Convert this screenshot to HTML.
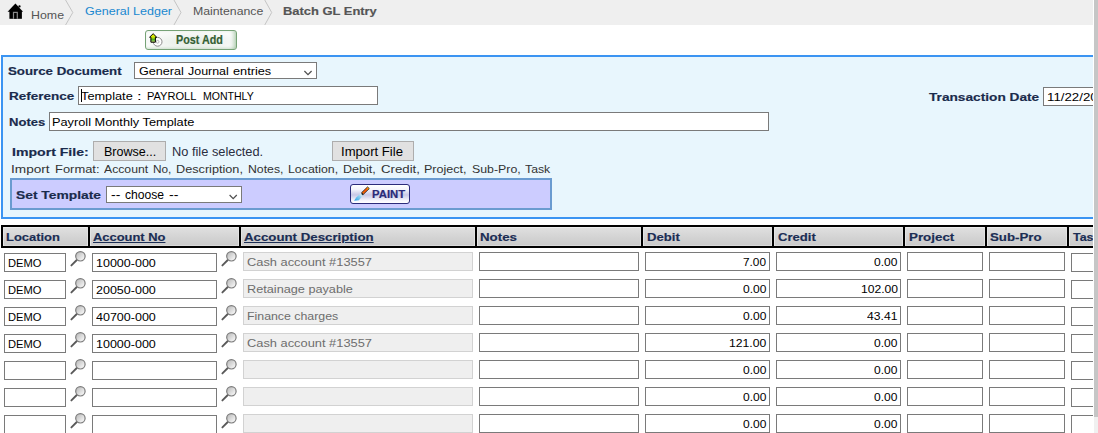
<!DOCTYPE html>
<html><head><meta charset="utf-8">
<style>
html,body{margin:0;padding:0;background:#fff;width:1098px;height:433px;overflow:hidden;}
body{position:relative;font-family:"Liberation Sans", sans-serif;}
#clip{position:absolute;left:0;top:0;width:1093px;height:433px;overflow:hidden;}
.a{position:absolute;box-sizing:border-box;}
.t{position:absolute;white-space:nowrap;transform-origin:0 0;line-height:20px;font-family:"Liberation Sans", sans-serif;}
.inp{position:absolute;box-sizing:border-box;background:#fff;border:1px solid #7a7a7a;}
.ro{position:absolute;box-sizing:border-box;background:#efefef;border:1px solid #d2d2d2;}
.btn{position:absolute;box-sizing:border-box;background:#e1e1e1;border:1px solid #adadad;}
.sep{position:absolute;top:225px;width:2px;height:23px;background:#000;}
.hc{position:absolute;top:227px;height:19px;background:linear-gradient(#ececec 0,#ececec 1px,#dfdfdf 1px,#d2d2d2 60%,#cacaca 18px,#d8d8d8 18px);box-shadow:inset 1px 0 #e4e4e4,inset -1px 0 #e2e2e2;}
</style></head><body>
<div id="clip">
<!-- breadcrumb -->
<div class="a" style="left:0;top:0;width:1093px;height:25px;background:#efefef;"></div>
<svg class="a" style="left:0;top:0" width="400" height="25">
 <polyline points="65,-1 72.8,12.5 65,26" fill="none" stroke="#c4c4c4" stroke-width="1"/>
 <polyline points="173.4,-1 181,12.5 173.4,26" fill="none" stroke="#c4c4c4" stroke-width="1"/>
 <polyline points="264.2,-1 271.7,12.5 264.2,26" fill="none" stroke="#c4c4c4" stroke-width="1"/>
 <!-- home icon -->
 <path d="M15.4,3.6 L7.6,11.7 L23.1,11.7 Z" fill="#000"/>
 <rect x="9.4" y="11" width="12.5" height="7.8" fill="#000"/>
 <rect x="12.9" y="11.8" width="5" height="7" fill="#8a8a8a"/>
 <rect x="14.1" y="13" width="2.6" height="5.8" fill="#000"/>
 <circle cx="19.5" cy="6.4" r="1.15" fill="#000"/>
</svg>
<!-- post add button -->
<div class="a" style="left:145px;top:30px;width:92px;height:20px;border:1px solid #76a276;border-radius:3px;background:radial-gradient(ellipse 52px 11px at 52% 60%, #e2ebe2 0%, #f3f6f3 65%, #fbfcfb 100%);box-shadow:inset -4px 0 4px -2px rgba(90,150,90,0.45), inset 0 -2px 3px -1px rgba(120,170,120,0.25);"></div>
<svg class="a" style="left:145px;top:30px" width="30" height="20">
 <circle cx="12.6" cy="11.8" r="4.4" fill="#fff" stroke="#8a8a8a" stroke-width="1"/>
 <circle cx="12.6" cy="11.8" r="1.4" fill="none" stroke="#aaa" stroke-width="0.8"/>
 <defs><linearGradient id="ga" x1="0" y1="0" x2="0" y2="1"><stop offset="0" stop-color="#f4f400"/><stop offset="0.42" stop-color="#c8e200"/><stop offset="0.72" stop-color="#44aa28"/><stop offset="1" stop-color="#eef286"/></linearGradient></defs>
 <path d="M8.15,3.7 L4.6,7.2 L5.9,7.2 L5.9,12.2 L10.4,12.2 L10.4,7.2 L11.7,7.2 Z" fill="url(#ga)" stroke="#000" stroke-width="1" stroke-linejoin="miter"/>
</svg>
<!-- panel -->
<div class="a" style="left:1px;top:55px;width:1100px;height:164px;border:2px solid #3b94f2;background:#e8f6fd;"></div>
<!-- source doc select -->
<div class="inp" style="left:134px;top:62px;width:183px;height:17px;"></div>
<svg class="a" style="left:300px;top:64px" width="16" height="14"><polyline points="4.4,7 8,10.6 11.6,7" fill="none" stroke="#505050" stroke-width="1.25"/></svg>
<div class="inp" style="left:78px;top:86px;width:300px;height:19px;"></div>
<div class="a" style="left:81px;top:89px;width:1px;height:13px;background:#000;"></div>
<div class="inp" style="left:49px;top:112px;width:720px;height:19px;"></div>
<div class="inp" style="left:1043px;top:87px;width:100px;height:19px;"></div>
<div class="btn" style="left:93px;top:141px;width:73px;height:20px;"></div>
<div class="btn" style="left:332px;top:141px;width:82px;height:20px;"></div>
<!-- template box -->
<div class="a" style="left:10px;top:178px;width:542px;height:32px;border:2px solid #6a9bd0;background:#ccccff;"></div>
<div class="inp" style="left:106px;top:186px;width:136px;height:17px;"></div>
<svg class="a" style="left:226px;top:188px" width="16" height="14"><polyline points="3.6,7 7.2,10.6 10.8,7" fill="none" stroke="#505050" stroke-width="1.25"/></svg>
<div class="a" style="left:350px;top:184px;width:60px;height:20px;border:1px solid #2b2b7a;border-radius:3px;background:linear-gradient(#ffffff,#f4f4fb 25%,#c8c8e6 55%,#f4f4fb 85%,#ffffff);"></div>
<svg class="a" style="left:350px;top:184px" width="22" height="20">
 <defs><linearGradient id="gb" x1="0" y1="1" x2="1" y2="0"><stop offset="0" stop-color="#28a0e4"/><stop offset="0.55" stop-color="#8fd0f0"/><stop offset="0.95" stop-color="#ffffff"/></linearGradient>
 <linearGradient id="gh" x1="0" y1="0" x2="1" y2="0"><stop offset="0" stop-color="#f07000"/><stop offset="0.6" stop-color="#ff5000"/><stop offset="1" stop-color="#ffd800"/></linearGradient></defs>
 <path d="M11.1,8.9 L13.3,11 L8.9,16.3 L4.1,16.7 L6.4,13.2 Z" fill="url(#gb)"/>
 <path d="M17.5,2.9 L19.3,4.6 L13.4,10.3 L11.7,8.6 Z" fill="url(#gh)" stroke="#1a1a1a" stroke-width="0.8" stroke-linejoin="round"/>
 <path d="M11.7,8.6 L13.4,10.3 L13,11.6 L11.3,10 Z" fill="#222"/>
</svg>
<!-- table header -->
<div class="a" style="left:1px;top:225px;width:1100px;height:23px;background:#000;"></div>
<div class="hc" style="left:3px;width:85px;"></div>
<div class="hc" style="left:90px;width:149px;"></div>
<div class="hc" style="left:241px;width:234px;"></div>
<div class="hc" style="left:477px;width:164px;"></div>
<div class="hc" style="left:643px;width:129px;"></div>
<div class="hc" style="left:774px;width:129px;"></div>
<div class="hc" style="left:905px;width:80px;"></div>
<div class="hc" style="left:987px;width:80px;"></div>
<div class="hc" style="left:1069px;width:80px;"></div>
<svg width="0" height="0" style="position:absolute"><defs><linearGradient id="gm" x1="0.1" y1="0.1" x2="0.9" y2="0.9"><stop offset="0" stop-color="#bcbcbc"/><stop offset="0.55" stop-color="#dedede"/><stop offset="1" stop-color="#fbfbfb"/></linearGradient></defs></svg>
<div class="inp" style="left:4px;top:253px;width:62px;height:19px;"></div>
<svg class="a" style="left:69px;top:250px" width="17" height="17" viewBox="0 0 17 17"><defs></defs><line x1="2.4" y1="15.4" x2="7.8" y2="10" stroke="#5a5a5a" stroke-width="1.9" stroke-linecap="round"/><circle cx="11.4" cy="6.3" r="4.7" fill="url(#gm)" stroke="#7c7c7c" stroke-width="1.2"/></svg>
<div class="inp" style="left:92px;top:253px;width:125px;height:19px;"></div>
<svg class="a" style="left:220px;top:250px" width="17" height="17" viewBox="0 0 17 17"><defs></defs><line x1="2.4" y1="15.4" x2="7.8" y2="10" stroke="#5a5a5a" stroke-width="1.9" stroke-linecap="round"/><circle cx="11.4" cy="6.3" r="4.7" fill="url(#gm)" stroke="#7c7c7c" stroke-width="1.2"/></svg>
<div class="ro" style="left:243px;top:252px;width:230px;height:19px;"></div>
<div class="inp" style="left:479px;top:252px;width:160px;height:19px;"></div>
<div class="inp" style="left:645px;top:252px;width:125px;height:19px;"></div>
<div class="inp" style="left:776px;top:252px;width:125px;height:19px;"></div>
<div class="inp" style="left:907px;top:252px;width:76px;height:19px;"></div>
<div class="inp" style="left:989px;top:252px;width:76px;height:19px;"></div>
<div class="inp" style="left:1071px;top:253px;width:76px;height:19px;"></div>
<div class="inp" style="left:4px;top:280px;width:62px;height:19px;"></div>
<svg class="a" style="left:69px;top:277px" width="17" height="17" viewBox="0 0 17 17"><defs></defs><line x1="2.4" y1="15.4" x2="7.8" y2="10" stroke="#5a5a5a" stroke-width="1.9" stroke-linecap="round"/><circle cx="11.4" cy="6.3" r="4.7" fill="url(#gm)" stroke="#7c7c7c" stroke-width="1.2"/></svg>
<div class="inp" style="left:92px;top:280px;width:125px;height:19px;"></div>
<svg class="a" style="left:220px;top:277px" width="17" height="17" viewBox="0 0 17 17"><defs></defs><line x1="2.4" y1="15.4" x2="7.8" y2="10" stroke="#5a5a5a" stroke-width="1.9" stroke-linecap="round"/><circle cx="11.4" cy="6.3" r="4.7" fill="url(#gm)" stroke="#7c7c7c" stroke-width="1.2"/></svg>
<div class="ro" style="left:243px;top:279px;width:230px;height:19px;"></div>
<div class="inp" style="left:479px;top:279px;width:160px;height:19px;"></div>
<div class="inp" style="left:645px;top:279px;width:125px;height:19px;"></div>
<div class="inp" style="left:776px;top:279px;width:125px;height:19px;"></div>
<div class="inp" style="left:907px;top:279px;width:76px;height:19px;"></div>
<div class="inp" style="left:989px;top:279px;width:76px;height:19px;"></div>
<div class="inp" style="left:1071px;top:280px;width:76px;height:19px;"></div>
<div class="inp" style="left:4px;top:307px;width:62px;height:19px;"></div>
<svg class="a" style="left:69px;top:304px" width="17" height="17" viewBox="0 0 17 17"><defs></defs><line x1="2.4" y1="15.4" x2="7.8" y2="10" stroke="#5a5a5a" stroke-width="1.9" stroke-linecap="round"/><circle cx="11.4" cy="6.3" r="4.7" fill="url(#gm)" stroke="#7c7c7c" stroke-width="1.2"/></svg>
<div class="inp" style="left:92px;top:307px;width:125px;height:19px;"></div>
<svg class="a" style="left:220px;top:304px" width="17" height="17" viewBox="0 0 17 17"><defs></defs><line x1="2.4" y1="15.4" x2="7.8" y2="10" stroke="#5a5a5a" stroke-width="1.9" stroke-linecap="round"/><circle cx="11.4" cy="6.3" r="4.7" fill="url(#gm)" stroke="#7c7c7c" stroke-width="1.2"/></svg>
<div class="ro" style="left:243px;top:306px;width:230px;height:19px;"></div>
<div class="inp" style="left:479px;top:306px;width:160px;height:19px;"></div>
<div class="inp" style="left:645px;top:306px;width:125px;height:19px;"></div>
<div class="inp" style="left:776px;top:306px;width:125px;height:19px;"></div>
<div class="inp" style="left:907px;top:306px;width:76px;height:19px;"></div>
<div class="inp" style="left:989px;top:306px;width:76px;height:19px;"></div>
<div class="inp" style="left:1071px;top:307px;width:76px;height:19px;"></div>
<div class="inp" style="left:4px;top:334px;width:62px;height:19px;"></div>
<svg class="a" style="left:69px;top:331px" width="17" height="17" viewBox="0 0 17 17"><defs></defs><line x1="2.4" y1="15.4" x2="7.8" y2="10" stroke="#5a5a5a" stroke-width="1.9" stroke-linecap="round"/><circle cx="11.4" cy="6.3" r="4.7" fill="url(#gm)" stroke="#7c7c7c" stroke-width="1.2"/></svg>
<div class="inp" style="left:92px;top:334px;width:125px;height:19px;"></div>
<svg class="a" style="left:220px;top:331px" width="17" height="17" viewBox="0 0 17 17"><defs></defs><line x1="2.4" y1="15.4" x2="7.8" y2="10" stroke="#5a5a5a" stroke-width="1.9" stroke-linecap="round"/><circle cx="11.4" cy="6.3" r="4.7" fill="url(#gm)" stroke="#7c7c7c" stroke-width="1.2"/></svg>
<div class="ro" style="left:243px;top:333px;width:230px;height:19px;"></div>
<div class="inp" style="left:479px;top:333px;width:160px;height:19px;"></div>
<div class="inp" style="left:645px;top:333px;width:125px;height:19px;"></div>
<div class="inp" style="left:776px;top:333px;width:125px;height:19px;"></div>
<div class="inp" style="left:907px;top:333px;width:76px;height:19px;"></div>
<div class="inp" style="left:989px;top:333px;width:76px;height:19px;"></div>
<div class="inp" style="left:1071px;top:334px;width:76px;height:19px;"></div>
<div class="inp" style="left:4px;top:361px;width:62px;height:19px;"></div>
<svg class="a" style="left:69px;top:358px" width="17" height="17" viewBox="0 0 17 17"><defs></defs><line x1="2.4" y1="15.4" x2="7.8" y2="10" stroke="#5a5a5a" stroke-width="1.9" stroke-linecap="round"/><circle cx="11.4" cy="6.3" r="4.7" fill="url(#gm)" stroke="#7c7c7c" stroke-width="1.2"/></svg>
<div class="inp" style="left:92px;top:361px;width:125px;height:19px;"></div>
<svg class="a" style="left:220px;top:358px" width="17" height="17" viewBox="0 0 17 17"><defs></defs><line x1="2.4" y1="15.4" x2="7.8" y2="10" stroke="#5a5a5a" stroke-width="1.9" stroke-linecap="round"/><circle cx="11.4" cy="6.3" r="4.7" fill="url(#gm)" stroke="#7c7c7c" stroke-width="1.2"/></svg>
<div class="ro" style="left:243px;top:360px;width:230px;height:19px;"></div>
<div class="inp" style="left:479px;top:360px;width:160px;height:19px;"></div>
<div class="inp" style="left:645px;top:360px;width:125px;height:19px;"></div>
<div class="inp" style="left:776px;top:360px;width:125px;height:19px;"></div>
<div class="inp" style="left:907px;top:360px;width:76px;height:19px;"></div>
<div class="inp" style="left:989px;top:360px;width:76px;height:19px;"></div>
<div class="inp" style="left:1071px;top:361px;width:76px;height:19px;"></div>
<div class="inp" style="left:4px;top:388px;width:62px;height:19px;"></div>
<svg class="a" style="left:69px;top:385px" width="17" height="17" viewBox="0 0 17 17"><defs></defs><line x1="2.4" y1="15.4" x2="7.8" y2="10" stroke="#5a5a5a" stroke-width="1.9" stroke-linecap="round"/><circle cx="11.4" cy="6.3" r="4.7" fill="url(#gm)" stroke="#7c7c7c" stroke-width="1.2"/></svg>
<div class="inp" style="left:92px;top:388px;width:125px;height:19px;"></div>
<svg class="a" style="left:220px;top:385px" width="17" height="17" viewBox="0 0 17 17"><defs></defs><line x1="2.4" y1="15.4" x2="7.8" y2="10" stroke="#5a5a5a" stroke-width="1.9" stroke-linecap="round"/><circle cx="11.4" cy="6.3" r="4.7" fill="url(#gm)" stroke="#7c7c7c" stroke-width="1.2"/></svg>
<div class="ro" style="left:243px;top:387px;width:230px;height:19px;"></div>
<div class="inp" style="left:479px;top:387px;width:160px;height:19px;"></div>
<div class="inp" style="left:645px;top:387px;width:125px;height:19px;"></div>
<div class="inp" style="left:776px;top:387px;width:125px;height:19px;"></div>
<div class="inp" style="left:907px;top:387px;width:76px;height:19px;"></div>
<div class="inp" style="left:989px;top:387px;width:76px;height:19px;"></div>
<div class="inp" style="left:1071px;top:388px;width:76px;height:19px;"></div>
<div class="inp" style="left:4px;top:415px;width:62px;height:19px;"></div>
<svg class="a" style="left:69px;top:412px" width="17" height="17" viewBox="0 0 17 17"><defs></defs><line x1="2.4" y1="15.4" x2="7.8" y2="10" stroke="#5a5a5a" stroke-width="1.9" stroke-linecap="round"/><circle cx="11.4" cy="6.3" r="4.7" fill="url(#gm)" stroke="#7c7c7c" stroke-width="1.2"/></svg>
<div class="inp" style="left:92px;top:415px;width:125px;height:19px;"></div>
<svg class="a" style="left:220px;top:412px" width="17" height="17" viewBox="0 0 17 17"><defs></defs><line x1="2.4" y1="15.4" x2="7.8" y2="10" stroke="#5a5a5a" stroke-width="1.9" stroke-linecap="round"/><circle cx="11.4" cy="6.3" r="4.7" fill="url(#gm)" stroke="#7c7c7c" stroke-width="1.2"/></svg>
<div class="ro" style="left:243px;top:414px;width:230px;height:19px;"></div>
<div class="inp" style="left:479px;top:414px;width:160px;height:19px;"></div>
<div class="inp" style="left:645px;top:414px;width:125px;height:19px;"></div>
<div class="inp" style="left:776px;top:414px;width:125px;height:19px;"></div>
<div class="inp" style="left:907px;top:414px;width:76px;height:19px;"></div>
<div class="inp" style="left:989px;top:414px;width:76px;height:19px;"></div>
<div class="inp" style="left:1071px;top:415px;width:76px;height:19px;"></div>
<div class="t" style="left:31.40px;top:5px;font-size:11.5px;color:#555;transform:scaleX(1.0766);">Home</div>
<div class="t" style="left:84.80px;top:1px;font-size:11.5px;color:#1a88d0;transform:scaleX(1.0888);">General Ledger</div>
<div class="t" style="left:192.50px;top:1px;font-size:11.5px;color:#555;transform:scaleX(1.0679);">Maintenance</div>
<div class="t" style="left:283.00px;top:1px;font-size:11.5px;font-weight:bold;-webkit-text-stroke:0.18px #555;color:#555;transform:scaleX(1.1232);">Batch GL Entry</div>
<div class="t" style="left:175.50px;top:30px;font-size:12px;font-weight:bold;-webkit-text-stroke:0.18px #345f34;color:#345f34;transform:scaleX(0.8962);">Post Add</div>
<div class="t" style="left:8.20px;top:61px;font-size:11.5px;font-weight:bold;-webkit-text-stroke:0.18px #1a2b4c;color:#1a2b4c;transform:scaleX(1.1544);">Source Document</div>
<div class="t" style="left:8.60px;top:86px;font-size:11.5px;font-weight:bold;-webkit-text-stroke:0.18px #1a2b4c;color:#1a2b4c;transform:scaleX(1.1735);">Reference</div>
<div class="t" style="left:8.60px;top:112px;font-size:11.5px;font-weight:bold;-webkit-text-stroke:0.18px #1a2b4c;color:#1a2b4c;transform:scaleX(1.1345);">Notes</div>
<div class="t" style="left:928.80px;top:87px;font-size:11.5px;font-weight:bold;-webkit-text-stroke:0.18px #1a2b4c;color:#1a2b4c;transform:scaleX(1.1889);">Transaction Date</div>
<div class="t" style="left:11.50px;top:142px;font-size:11.5px;font-weight:bold;-webkit-text-stroke:0.18px #1a2b4c;color:#1a2b4c;transform:scaleX(1.2253);">Import File:</div>
<div class="t" style="left:16.10px;top:185px;font-size:11.5px;font-weight:bold;-webkit-text-stroke:0.18px #1a2b4c;color:#1a2b4c;transform:scaleX(1.2015);">Set Template</div>
<div class="t" style="left:139.30px;top:61px;font-size:11.5px;color:#000;transform:scaleX(1.0952);">General</div>
<div class="t" style="left:187.80px;top:61px;font-size:11.5px;color:#000;transform:scaleX(1.0817);">Journal</div>
<div class="t" style="left:233.30px;top:61px;font-size:11.5px;color:#000;transform:scaleX(1.1074);">entries</div>
<div class="t" style="left:81.40px;top:86px;font-size:11.5px;color:#000;transform:scaleX(1.1088);">Template</div>
<div class="t" style="left:136.55px;top:86px;font-size:11.5px;color:#000;transform:scaleX(1.4500);">:</div>
<div class="t" style="left:147.00px;top:86px;font-size:11.5px;color:#000;transform:scaleX(0.9625);">PAYROLL</div>
<div class="t" style="left:202.80px;top:86px;font-size:11.5px;color:#000;transform:scaleX(0.9156);">MONTHLY</div>
<div class="t" style="left:52.40px;top:112px;font-size:11.5px;color:#000;transform:scaleX(1.1095);">Payroll Monthly Template</div>
<div class="t" style="left:1047.00px;top:87px;font-size:11.5px;color:#000;transform:scaleX(1.1544);">11/22/2015</div>
<div class="t" style="left:103.50px;top:142px;font-size:12px;color:#000;transform:scaleX(1.0447);">Browse...</div>
<div class="t" style="left:172.00px;top:142px;font-size:12px;color:#2a2d40;transform:scaleX(1.0677);">No file selected.</div>
<div class="t" style="left:341.41px;top:142px;font-size:12px;color:#000;transform:scaleX(1.0928);">Import File</div>
<div class="t" style="left:10.81px;top:159px;font-size:11.5px;color:#333;transform:scaleX(1.1853);">Import</div>
<div class="t" style="left:54.60px;top:159px;font-size:11.5px;color:#333;transform:scaleX(1.1238);">Format:</div>
<div class="t" style="left:103.90px;top:159px;font-size:11.5px;color:#333;transform:scaleX(1.0624);">Account</div>
<div class="t" style="left:153.10px;top:159px;font-size:11.5px;color:#333;transform:scaleX(1.0282);">No,</div>
<div class="t" style="left:176.30px;top:159px;font-size:11.5px;color:#333;transform:scaleX(1.1021);">Description,</div>
<div class="t" style="left:248.00px;top:159px;font-size:11.5px;color:#333;transform:scaleX(1.0653);">Notes,</div>
<div class="t" style="left:288.20px;top:159px;font-size:11.5px;color:#333;transform:scaleX(1.0736);">Location,</div>
<div class="t" style="left:343.10px;top:159px;font-size:11.5px;color:#333;transform:scaleX(1.0889);">Debit,</div>
<div class="t" style="left:380.60px;top:159px;font-size:11.5px;color:#333;transform:scaleX(1.1492);">Credit,</div>
<div class="t" style="left:424.30px;top:159px;font-size:11.5px;color:#333;transform:scaleX(1.0904);">Project,</div>
<div class="t" style="left:471.60px;top:159px;font-size:11.5px;color:#333;transform:scaleX(1.0733);">Sub-Pro,</div>
<div class="t" style="left:525.10px;top:159px;font-size:11.5px;color:#333;transform:scaleX(1.0671);">Task</div>
<div class="t" style="left:111.20px;top:185px;font-size:12px;color:#000;transform:scaleX(1.1631);">--</div>
<div class="t" style="left:125.40px;top:185px;font-size:12px;color:#000;transform:scaleX(1.0097);">choose</div>
<div class="t" style="left:169.10px;top:185px;font-size:12px;color:#000;transform:scaleX(1.1756);">--</div>
<div class="t" style="left:372.00px;top:184px;font-size:10.5px;font-weight:bold;-webkit-text-stroke:0.18px #2a2a78;color:#2a2a78;transform:scaleX(1.0796);">PAINT</div>
<div class="t" style="left:6.40px;top:227px;font-size:11.5px;font-weight:bold;-webkit-text-stroke:0.18px #1b2d54;color:#1b2d54;transform:scaleX(1.1255);">Location</div>
<div class="t" style="left:93.40px;top:227px;font-size:11.5px;font-weight:bold;-webkit-text-stroke:0.18px #1b2d54;color:#1b2d54;transform:scaleX(1.1225);text-decoration:underline;">Account No</div>
<div class="t" style="left:244.30px;top:227px;font-size:11.5px;font-weight:bold;-webkit-text-stroke:0.18px #1b2d54;color:#1b2d54;transform:scaleX(1.1527);text-decoration:underline;">Account Description</div>
<div class="t" style="left:480.20px;top:227px;font-size:11.5px;font-weight:bold;-webkit-text-stroke:0.18px #1b2d54;color:#1b2d54;transform:scaleX(1.1567);">Notes</div>
<div class="t" style="left:646.50px;top:227px;font-size:11.5px;font-weight:bold;-webkit-text-stroke:0.18px #1b2d54;color:#1b2d54;transform:scaleX(1.1411);">Debit</div>
<div class="t" style="left:777.50px;top:227px;font-size:11.5px;font-weight:bold;-webkit-text-stroke:0.18px #1b2d54;color:#1b2d54;transform:scaleX(1.1379);">Credit</div>
<div class="t" style="left:908.90px;top:227px;font-size:11.5px;font-weight:bold;-webkit-text-stroke:0.18px #1b2d54;color:#1b2d54;transform:scaleX(1.1620);">Project</div>
<div class="t" style="left:990.20px;top:227px;font-size:11.5px;font-weight:bold;-webkit-text-stroke:0.18px #1b2d54;color:#1b2d54;transform:scaleX(1.1545);">Sub-Pro</div>
<div class="t" style="left:1072.60px;top:227px;font-size:11.5px;font-weight:bold;-webkit-text-stroke:0.18px #1b2d54;color:#1b2d54;transform:scaleX(1.0785);">Task</div>
<div class="t" style="left:7.60px;top:253px;font-size:11.5px;color:#000;transform:scaleX(0.9695);">DEMO</div>
<div class="t" style="left:95.80px;top:253px;font-size:11.5px;color:#000;transform:scaleX(1.0879);">10000-000</div>
<div class="t" style="left:246.50px;top:252px;font-size:11.5px;color:#6d6d6d;transform:scaleX(1.1167);">Cash account #13557</div>
<div class="t" style="left:743.10px;top:252px;font-size:10.5px;color:#000;transform:scaleX(1.1264);">7.00</div>
<div class="t" style="left:874.20px;top:252px;font-size:10.5px;color:#000;transform:scaleX(1.1458);">0.00</div>
<div class="t" style="left:7.60px;top:280px;font-size:11.5px;color:#000;transform:scaleX(0.9695);">DEMO</div>
<div class="t" style="left:95.80px;top:280px;font-size:11.5px;color:#000;transform:scaleX(1.0879);">20050-000</div>
<div class="t" style="left:246.50px;top:279px;font-size:11.5px;color:#6d6d6d;transform:scaleX(1.1035);">Retainage payable</div>
<div class="t" style="left:742.70px;top:279px;font-size:10.5px;color:#000;transform:scaleX(1.1458);">0.00</div>
<div class="t" style="left:860.50px;top:279px;font-size:10.5px;color:#000;transform:scaleX(1.1557);">102.00</div>
<div class="t" style="left:7.60px;top:307px;font-size:11.5px;color:#000;transform:scaleX(0.9695);">DEMO</div>
<div class="t" style="left:95.80px;top:307px;font-size:11.5px;color:#000;transform:scaleX(1.0879);">40700-000</div>
<div class="t" style="left:246.50px;top:306px;font-size:11.5px;color:#6d6d6d;transform:scaleX(1.0731);">Finance charges</div>
<div class="t" style="left:742.70px;top:306px;font-size:10.5px;color:#000;transform:scaleX(1.1458);">0.00</div>
<div class="t" style="left:867.20px;top:306px;font-size:10.5px;color:#000;transform:scaleX(1.1575);">43.41</div>
<div class="t" style="left:7.60px;top:334px;font-size:11.5px;color:#000;transform:scaleX(0.9695);">DEMO</div>
<div class="t" style="left:95.80px;top:334px;font-size:11.5px;color:#000;transform:scaleX(1.0879);">10000-000</div>
<div class="t" style="left:246.50px;top:333px;font-size:11.5px;color:#6d6d6d;transform:scaleX(1.1167);">Cash account #13557</div>
<div class="t" style="left:728.80px;top:333px;font-size:10.5px;color:#000;transform:scaleX(1.1619);">121.00</div>
<div class="t" style="left:874.20px;top:333px;font-size:10.5px;color:#000;transform:scaleX(1.1458);">0.00</div>
<div class="t" style="left:742.70px;top:360px;font-size:10.5px;color:#000;transform:scaleX(1.1458);">0.00</div>
<div class="t" style="left:874.20px;top:360px;font-size:10.5px;color:#000;transform:scaleX(1.1458);">0.00</div>
<div class="t" style="left:742.70px;top:387px;font-size:10.5px;color:#000;transform:scaleX(1.1458);">0.00</div>
<div class="t" style="left:874.20px;top:387px;font-size:10.5px;color:#000;transform:scaleX(1.1458);">0.00</div>
<div class="t" style="left:742.70px;top:414px;font-size:10.5px;color:#000;transform:scaleX(1.1458);">0.00</div>
<div class="t" style="left:874.20px;top:414px;font-size:10.5px;color:#000;transform:scaleX(1.1458);">0.00</div>
</div>
<div class="a" style="left:1093px;top:0;width:1px;height:433px;background:#fff;"></div>
<div class="a" style="left:1094px;top:0;width:4px;height:417px;background:#c6c6c6;"></div>
<div class="a" style="left:1094px;top:417px;width:4px;height:16px;background:#f0f0f0;"></div>
</body></html>
